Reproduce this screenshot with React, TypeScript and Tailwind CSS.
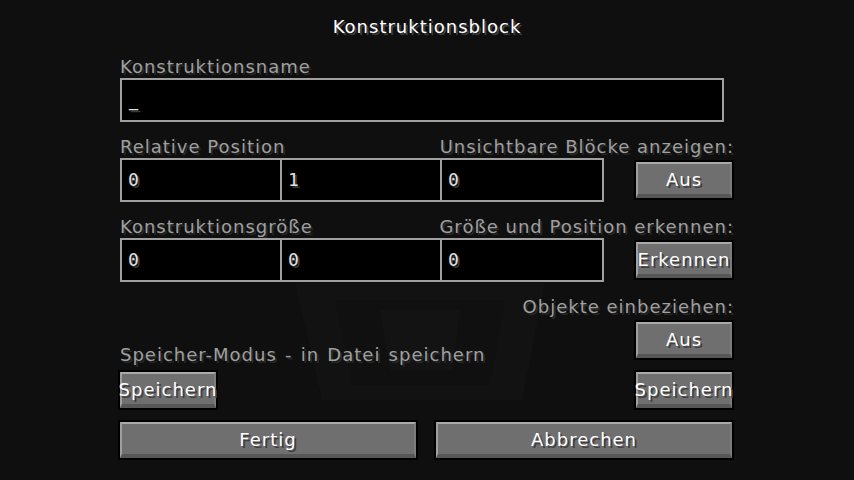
import React from 'react';

const font = { fontFamily: '"DejaVu Sans", "Liberation Sans", sans-serif' };

const Label: React.FC<{ text: string; right?: boolean; wide?: boolean }> = ({ text, right, wide }) => (
  <span
    className={`block h-[16px] leading-[16px] text-[18px] tracking-[1px] whitespace-nowrap text-[#a0a0a0] [text-shadow:2px_2px_0_#282828] ${
      right ? 'text-right' : 'pl-[2px]'
    } ${wide ? '[word-spacing:1.5px]' : ''}`}
  >
    {text}
  </span>
);

const Field: React.FC<{ value: string; width: string; first?: boolean }> = ({ value, width, first }) => (
  <div
    className={`${width} h-[44px] border-2 border-[#a0a0a0] bg-black flex items-center pl-[6px] ${first ? '' : '-ml-[2px]'}`}
  >
    <span className="leading-[16px] text-[18px] font-['DejaVu_Sans_Mono',monospace] text-[#e0e0e0] [text-shadow:2px_2px_0_#383838]">
      {value}
    </span>
  </div>
);

const McButton: React.FC<{ text: string; width?: string }> = ({ text, width = 'w-[100px]' }) => (
  <div className={`${width} h-[40px] border-2 border-black bg-black shrink-0`}>
    <div className="h-full w-full bg-[#6f6f6f] border-t-2 border-l-2 border-r-2 border-b-4 border-t-[#a9a9a9] border-l-[#a0a0a0] border-r-[#7c7c7c] border-b-[#575757] flex items-center justify-center overflow-visible">
      <span className="leading-[16px] text-[18px] tracking-[1px] whitespace-nowrap text-white [text-shadow:2px_2px_0_#3f3f3f] mt-[2px]">
        {text}
      </span>
    </div>
  </div>
);

const PositionRow: React.FC<{ values: string[] }> = ({ values }) => (
  <div className="flex ml-[2px]">
    <Field value={values[0]} width="w-[162px]" first />
    <Field value={values[1]} width="w-[162px]" />
    <Field value={values[2]} width="w-[164px]" />
  </div>
);

export default function App() {
  return (
    <div className="relative w-[854px] h-[480px] overflow-hidden bg-[#0f0f0f]" style={font}>
      {/* faint block silhouette behind the dialog */}
      <svg className="absolute left-0 top-0" width="854" height="480" viewBox="0 0 854 480">
        <polygon points="295,283 545,283 522,400 322,400" fill="#121212" />
        <polygon points="335,300 505,300 490,385 352,385" fill="#101010" />
        <polygon points="380,310 460,310 452,370 390,370" fill="#131313" />
      </svg>

      <div className="relative">
        <div className="pt-[19px] h-[35px] leading-[16px] text-[18px] tracking-[1px] text-center text-white [text-shadow:2px_2px_0_#3f3f3f]">
          Konstruktionsblock
        </div>

        <div className="ml-[118px] w-[616px]">
          <div className="mt-[24px]">
            <Label text="Konstruktionsname" />
          </div>
          <div className="mt-[3px] ml-[2px] w-[604px] h-[44px] border-2 border-[#a0a0a0] bg-black flex items-center pl-[7px]">
            <span className="leading-[16px] text-[18px] text-[#e0e0e0] [text-shadow:2px_2px_0_#383838]">_</span>
          </div>

          <div className="mt-[17px] flex justify-between">
            <Label text="Relative Position" />
            <Label text="Unsichtbare Blöcke anzeigen:" right />
          </div>
          <div className="flex justify-between items-start h-[47px]">
            <div className="mt-[3px]">
              <PositionRow values={['0', '1', '0']} />
            </div>
            <div className="mt-[5px]">
              <McButton text="Aus" />
            </div>
          </div>

          <div className="mt-[17px] flex justify-between">
            <Label text="Konstruktionsgröße" />
            <Label text="Größe und Position erkennen:" right />
          </div>
          <div className="flex justify-between items-start h-[47px]">
            <div className="mt-[3px]">
              <PositionRow values={['0', '0', '0']} />
            </div>
            <div className="mt-[5px]">
              <McButton text="Erkennen" />
            </div>
          </div>

          <div className="mt-[17px] flex justify-end">
            <Label text="Objekte einbeziehen:" right />
          </div>
          <div className="flex justify-between items-start h-[45px]">
            <div className="mt-[32px]">
              <Label text="Speicher-Modus - in Datei speichern" wide />
            </div>
            <div className="mt-[5px]">
              <McButton text="Aus" />
            </div>
          </div>

          <div className="mt-[10px] flex justify-between">
            <McButton text="Speichern" />
            <McButton text="Speichern" />
          </div>

          <div className="mt-[10px] flex justify-between">
            <McButton text="Fertig" width="w-[300px]" />
            <McButton text="Abbrechen" width="w-[300px]" />
          </div>
        </div>
      </div>
    </div>
  );
}
